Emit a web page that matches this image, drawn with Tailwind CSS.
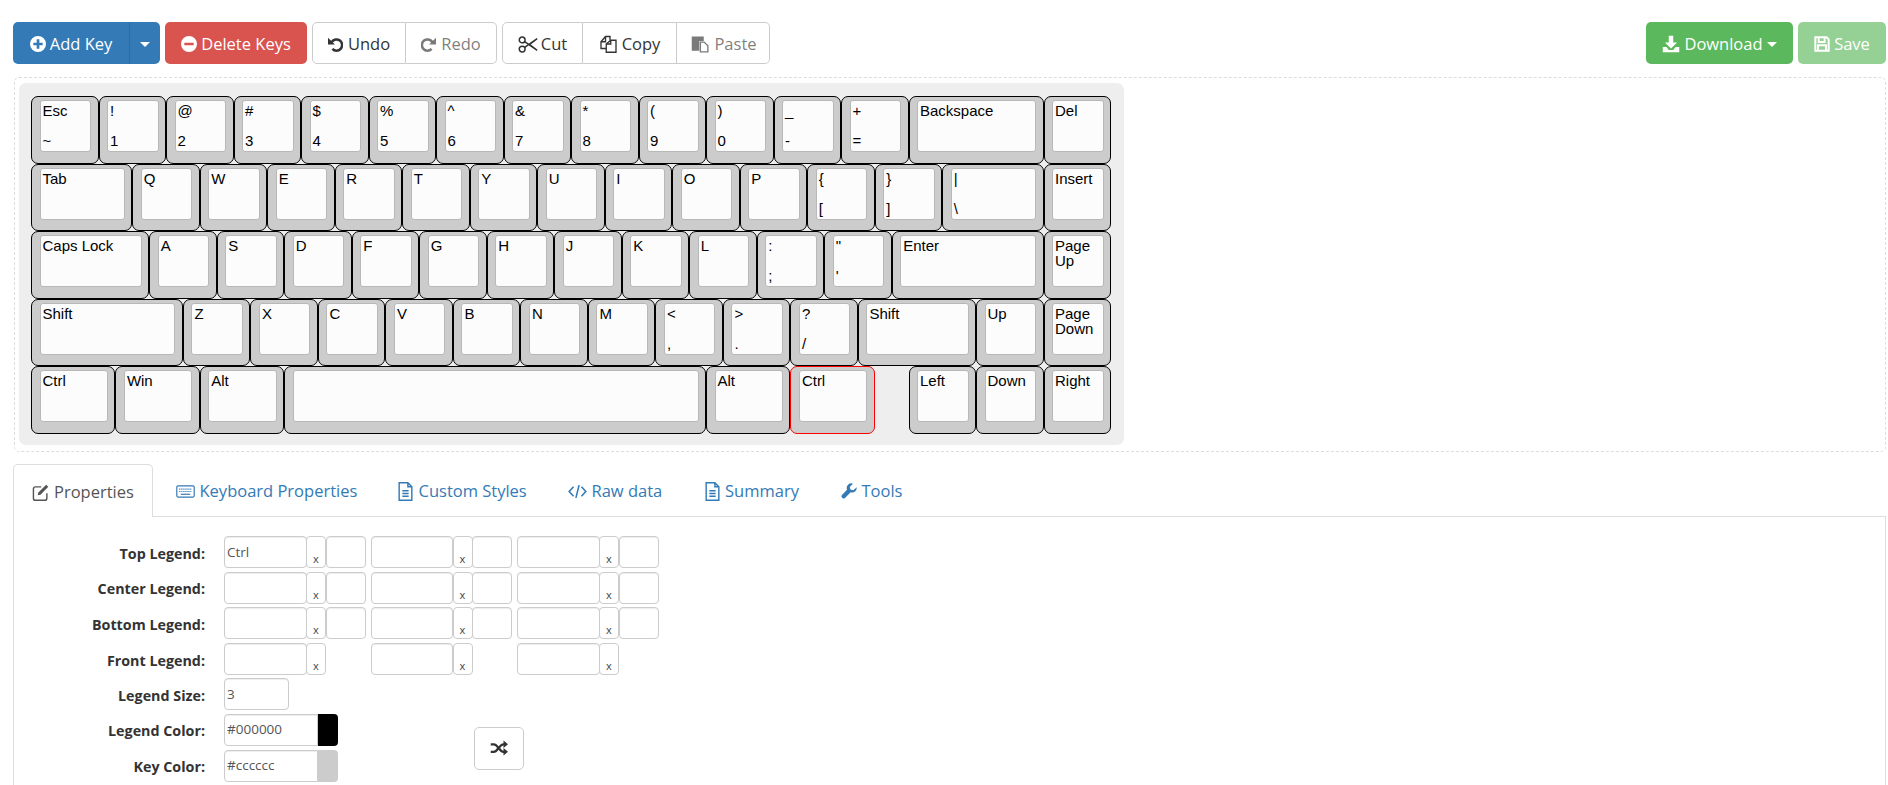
<!DOCTYPE html>
<html lang="en">
<head>
    <meta charset="UTF-8">
    <title>Keyboard Layout Editor</title>
    <script src="https://cdn.jsdelivr.net/npm/@tailwindcss/browser@4"></script>
</head>
<body class="bg-white h-screen overflow-hidden font-['Open_Sans',sans-serif] text-[16.5px] text-[#333]">

    <!-- Toolbar -->
    <div class="flex justify-between pt-[22px] pl-[13px] pr-[2px] h-[77px]">
        <div class="flex h-[42px] gap-[5px]">
            <div class="flex">
                <div class="w-[116px] pt-[2px] bg-[#337ab7] text-white rounded-l-[5px] flex items-center justify-center gap-[4px]">
                    <svg class="w-[16px] h-[16px]" viewBox="0 0 24 24" fill="currentColor"><path fill-rule="evenodd" d="M12 0a12 12 0 1 0 0 24a12 12 0 0 0 0-24zM10 5h4v5h5v4h-5v5h-4v-5H5v-4h5z"/></svg>
                    <span>Add Key</span>
                </div>
                <div class="w-[31px] pt-[2px] bg-[#337ab7] border-l border-[#2e6da4] rounded-r-[5px] flex items-center justify-center">
                    <div class="border-x-[5px] border-t-[5px] border-x-transparent border-t-white"></div>
                </div>
            </div>
            <div class="w-[142px] pt-[2px] bg-[#d9534f] text-white rounded-[5px] flex items-center justify-center gap-[4px]">
                <svg class="w-[16px] h-[16px]" viewBox="0 0 24 24" fill="currentColor"><path fill-rule="evenodd" d="M12 0a12 12 0 1 0 0 24a12 12 0 0 0 0-24zM5 10h14v4H5z"/></svg>
                <span>Delete Keys</span>
            </div>
            <div class="flex">
                <div class="w-[94px] pt-[2px] border border-[#ccc] rounded-l-[5px] flex items-center justify-center gap-[5px]">
                    <svg class="w-[15px] h-[15px]" viewBox="0 0 24 24" fill="none" stroke="currentColor" stroke-width="4"><path d="M6 8a9 9 0 1 1 1 11"/><path d="M0 1v11h11z" fill="currentColor" stroke="none"/></svg>
                    <span>Undo</span>
                </div>
                <div class="w-[91px] pt-[2px] border border-l-0 border-[#ccc] rounded-r-[5px] flex items-center justify-center gap-[5px] text-[#333]/65">
                    <svg class="w-[15px] h-[15px]" viewBox="0 0 24 24" fill="none" stroke="currentColor" stroke-width="4"><path d="M18 8a9 9 0 1 0-1 11"/><path d="M24 1v11H13z" fill="currentColor" stroke="none"/></svg>
                    <span>Redo</span>
                </div>
            </div>
            <div class="flex">
                <div class="w-[81px] pt-[2px] border border-[#ccc] rounded-l-[5px] flex items-center justify-center gap-[3px]">
                    <svg class="w-[20px] h-[17px]" viewBox="0 0 24 20" fill="none" stroke="currentColor" stroke-width="1.8"><circle cx="5" cy="4.5" r="3.5"/><circle cx="5" cy="15.5" r="3.5"/><path d="M8 6.5L23 17l-9-7M8 13.5L23 3l-9 7"/></svg>
                    <span>Cut</span>
                </div>
                <div class="w-[94px] pt-[2px] border border-l-0 border-[#ccc] flex items-center justify-center gap-[4px]">
                    <svg class="w-[19px] h-[18px]" viewBox="0 0 24 24" fill="none" stroke="currentColor" stroke-width="1.8"><path d="M2 9l6-7h6v5M8 2v7H2v9h7"/><path d="M9 12l6-5h7v16H9zM15 7v5H9"/></svg>
                    <span>Copy</span>
                </div>
                <div class="w-[93px] pt-[2px] border border-l-0 border-[#ccc] rounded-r-[5px] flex items-center justify-center gap-[5px] pl-[2px] text-[#333]/65">
                    <svg class="w-[18px] h-[18px]" viewBox="0 0 24 24" fill="currentColor"><path d="M1 2h16v6h-6v13H1z"/><path d="M12.5 9.5h5l5 5v8h-10z" fill="none" stroke="currentColor" stroke-width="1.8"/></svg>
                    <span>Paste</span>
                </div>
            </div>
        </div>
        <div class="flex h-[42px] gap-[5px]">
            <div class="w-[147px] pt-[2px] bg-[#5cb85c] text-white rounded-[5px] flex items-center justify-center gap-[4px]">
                <svg class="w-[18px] h-[18px]" viewBox="0 0 24 24" fill="currentColor"><path d="M9 1h6v9h5l-8 8-8-8h5z"/><path d="M1 16h5l3 4h6l3-4h5v7H1z"/></svg>
                <span>Download</span>
                <div class="border-x-[5px] border-t-[5px] border-x-transparent border-t-white"></div>
            </div>
            <div class="w-[88px] pt-[2px] bg-[#5cb85c]/65 text-white rounded-[5px] flex items-center justify-center gap-[4px]">
                <svg class="w-[16px] h-[16px]" viewBox="0 0 24 24" fill="none" stroke="currentColor" stroke-width="3"><path d="M2 2h17l3 3v17H2z"/><path d="M7 2v7h9V2M6 22v-8h12v8"/></svg>
                <span>Save</span>
            </div>
        </div>
    </div>

    <!-- Keyboard -->
    <div class="ml-[14px] mr-[2px] h-[375px] border border-dashed border-[#ddd] rounded-[5px] pl-[4px] pt-[5px]">
        <div id="board" class="w-[1105px] h-[362px] bg-[#eee] rounded-[7px] pl-[12px] pt-[13px] font-['Liberation_Sans',sans-serif] text-[15px] leading-[15px] text-black"></div>
    </div>

    <!-- Tabs -->
    <div class="flex h-[53px] mt-[12px] ml-[13px] mr-[2px] border-b border-[#ddd] text-[#337ab7]">
        <div class="w-[140px] h-[53px] pl-[18px] pt-[2px] flex items-center gap-[5px] bg-white border border-b-0 border-[#ddd] rounded-t-[5px] text-[#555]">
            <svg class="w-[17px] h-[17px]" viewBox="0 0 24 24" fill="none" stroke="currentColor" stroke-width="2"><path d="M13 4H5a3 3 0 0 0-3 3v13a3 3 0 0 0 3 3h13a3 3 0 0 0 3-3v-7"/><path d="M20 1l3 3-11 11-4 1 1-4z" fill="currentColor" stroke="none"/></svg>
            <span>Properties</span>
        </div>
        <div class="w-[220px] ml-[2.5px] pl-[20px] pt-[2px] flex items-center gap-[5px]">
            <svg class="w-[19px] h-[15px]" viewBox="0 0 24 16" fill="none" stroke="currentColor" stroke-width="1.5"><rect x="1" y="1" width="22" height="14" rx="1.5"/><path d="M4 5h16M4 8h16" stroke-dasharray="1.6 1"/><path d="M6 11.5h12"/></svg>
            <span>Keyboard Properties</span>
        </div>
        <div class="w-[168px] ml-[2.5px] pl-[19.5px] pt-[2px] flex items-center gap-[6px]">
            <svg class="w-[15px] h-[19px]" viewBox="0 0 18 24" fill="none" stroke="currentColor" stroke-width="1.8"><path d="M1 1h11l5 5v17H1zM12 1v5h5"/><path d="M5 11h8M5 14.5h8M5 18h8"/></svg>
            <span>Custom Styles</span>
        </div>
        <div class="w-[135px] ml-[2.5px] pl-[19px] pt-[2px] flex items-center gap-[5px]">
            <svg class="w-[19px] h-[15px]" viewBox="0 0 24 18" fill="none" stroke="currentColor" stroke-width="2"><path d="M7 3L1.5 9 7 15M17 3l5.500 6L17 15M14 1l-4 16"/></svg>
            <span>Raw data</span>
        </div>
        <div class="w-[133px] ml-[2.5px] pl-[19px] pt-[2px] flex items-center gap-[5px]">
            <svg class="w-[15px] h-[19px]" viewBox="0 0 18 24" fill="none" stroke="currentColor" stroke-width="1.8"><path d="M1 1h11l5 5v17H1zM12 1v5h5"/><path d="M5 11h8M5 14.5h8M5 18h8"/></svg>
            <span>Summary</span>
        </div>
        <div class="w-[100px] ml-[2.5px] pl-[19px] pt-[2px] flex items-center gap-[5px]">
            <svg class="w-[16px] h-[16px]" viewBox="0 0 24 24" fill="currentColor"><path d="M23.500 6.500l-5 4.500-4-1-1.500-4 5-5a7 7 0 0 0-9 9L1.500 18a3.200 3.200 0 0 0 4.500 4.500l8.500-8.500a7 7 0 0 0 9-7.500z"/></svg>
            <span>Tools</span>
        </div>
    </div>

    <!-- Properties panel -->
    <div class="ml-[13px] mr-[2px] h-[300px] border-x border-[#ddd] pt-[19px] text-[13.5px] text-[#555]">
        <div id="legends" class="flex flex-col gap-[3.6px]"></div>
        <div class="flex mt-[3.6px]">
            <div class="flex flex-col gap-[3.6px]">
                <div class="flex h-[32px] items-center">
                    <label class="w-[191px] mr-[19px] pt-[2px] text-right font-bold text-[14.3px] text-[#333]">Legend Color:</label>
                    <input value="#000000" class="w-[94px] h-[32px] px-[2px] pb-[2px] border border-[#ccc] rounded-l-[4px] shadow-[inset_0_1px_1px_rgba(0,0,0,0.075)]">
                    <div class="w-[19.5px] h-[32px] bg-black rounded-r-[4px]"></div>
                </div>
                <div class="flex h-[32px] items-center">
                    <label class="w-[191px] mr-[19px] pt-[2px] text-right font-bold text-[14.3px] text-[#333]">Key Color:</label>
                    <input value="#cccccc" class="w-[94px] h-[32px] px-[2px] pb-[2px] border border-[#ccc] rounded-l-[4px] shadow-[inset_0_1px_1px_rgba(0,0,0,0.075)]">
                    <div class="w-[19.5px] h-[32px] bg-[#ccc] rounded-r-[4px]"></div>
                </div>
                <div class="flex h-[32px] items-center">
                    <div class="w-[191px] mr-[19px]"></div>
                    <input class="w-[92px] h-[32px] border border-[#ccc] rounded-[4px]">
                    <input class="w-[90.500px] h-[32px] ml-[18px] border border-[#ccc] rounded-[4px]">
                </div>
            </div>
            <div class="ml-[49.500px] mt-[13px] w-[50px] h-[43px] border border-[#ccc] rounded-[5px] flex items-center justify-center text-[#333]">
                <svg class="w-[18px] h-[16px]" viewBox="0 0 24 20" fill="none" stroke="currentColor" stroke-width="3"><path d="M1 5h4c6 0 7 10 13 10h2M1 15h4c6 0 7-10 13-10h2"/><path d="M18 0l6 5-6 5zM18 10l6 5-6 5z" fill="currentColor" stroke="none"/></svg>
            </div>
        </div>
    </div>

    <script>
        // key widths in keyboard units, 1u is 67.5px
        const widths = {
            1: 'w-[67.5px]',
            1.25: 'w-[84.375px]',
            1.5: 'w-[101.25px]',
            1.75: 'w-[118.125px]',
            2: 'w-[135px]',
            2.25: 'w-[151.875px]',
            6.25: 'w-[421.875px]'
        };
        const rows = [
            [['Esc', '~'], ['!', '1'], ['@', '2'], ['#', '3'], ['$', '4'], ['%', '5'], ['^', '6'], ['&amp;', '7'], ['*', '8'], ['(', '9'], [')', '0'], ['_', '-'], ['+', '='], ['Backspace', '', 2], ['Del', '']],
            [['Tab', '', 1.5], ['Q', ''], ['W', ''], ['E', ''], ['R', ''], ['T', ''], ['Y', ''], ['U', ''], ['I', ''], ['O', ''], ['P', ''], ['{', '['], ['}', ']'], ['|', '\\', 1.5], ['Insert', '']],
            [['Caps Lock', '', 1.75], ['A', ''], ['S', ''], ['D', ''], ['F', ''], ['G', ''], ['H', ''], ['J', ''], ['K', ''], ['L', ''], [':', ';'], ['"', "'"], ['Enter', '', 2.25], ['Page<br>Up', '']],
            [['Shift', '', 2.25], ['Z', ''], ['X', ''], ['C', ''], ['V', ''], ['B', ''], ['N', ''], ['M', ''], ['&lt;', ','], ['&gt;', '.'], ['?', '/'], ['Shift', '', 1.75], ['Up', ''], ['Page<br>Down', '']],
            [['Ctrl', '', 1.25], ['Win', '', 1.25], ['Alt', '', 1.25], ['', '', 6.25], ['Alt', '', 1.25], ['Ctrl', '', 1.25, true], null, ['Left', ''], ['Down', ''], ['Right', '']]
        ];

        document.getElementById('board').innerHTML = rows.map(row => {
            const keys = row.map(key => {
                if (!key) return '<div class="w-[33.75px]"></div>';
                const [top, bottom, size, selected] = key;
                const border = selected ? 'border-[#f00]' : 'border-black';
                return `<div class="${widths[size || 1]} h-[67.5px] border-[1.25px] ${border} rounded-[7px] bg-[#ccc] pt-[3px] pl-[7.5px] pr-[6.5px] pb-[10.5px]">
                    <div class="h-full bg-[#fcfcfc] border border-[#b8b8b8] rounded-[3px] pt-[2px] pb-[3px] px-[2px] flex flex-col justify-between"><span>${top}</span><span>${bottom}</span></div>
                </div>`;
            }).join('');
            return `<div class="flex h-[67.5px]">${keys}</div>`;
        }).join('');

        const input = 'h-[32px] border border-[#ccc] rounded-[4px] shadow-[inset_0_1px_1px_rgba(0,0,0,0.075)]';
        const xBox = 'w-[20px] h-[32px] -ml-[0.5px] border border-[#ccc] rounded-[4px] flex items-end justify-center text-[11px] leading-[15px] pb-[1px] text-[#444]';
        const group = (value, withSize, first) => `
            <div class="flex w-[141.5px] ${first ? '' : 'ml-[5px]'}">
                <input value="${value}" class="w-[82.5px] px-[2px] ${input}">
                <div class="${xBox}">x</div>
                ${withSize ? `<input class="w-[40px] -ml-[0.5px] ${input}">` : ''}
            </div>`;
        const labels = ['Top Legend:', 'Center Legend:', 'Bottom Legend:', 'Front Legend:'];
        document.getElementById('legends').innerHTML = labels.map((label, i) => {
            const withSize = i < 3;
            return `<div class="flex h-[32px] items-center">
                <label class="w-[191px] mr-[19px] pt-[3px] text-right font-bold text-[14.3px] text-[#333]">${label}</label>
                ${group(i === 0 ? 'Ctrl' : '', withSize, true)}${group('', withSize)}${group('', withSize)}
            </div>`;
        }).join('') + `<div class="flex h-[32px] items-center">
            <label class="w-[191px] mr-[19px] pt-[3px] text-right font-bold text-[14.3px] text-[#333]">Legend Size:</label>
            <input value="3" class="w-[64.5px] px-[2px] ${input}">
        </div>`;
    </script>
</body>
</html>
